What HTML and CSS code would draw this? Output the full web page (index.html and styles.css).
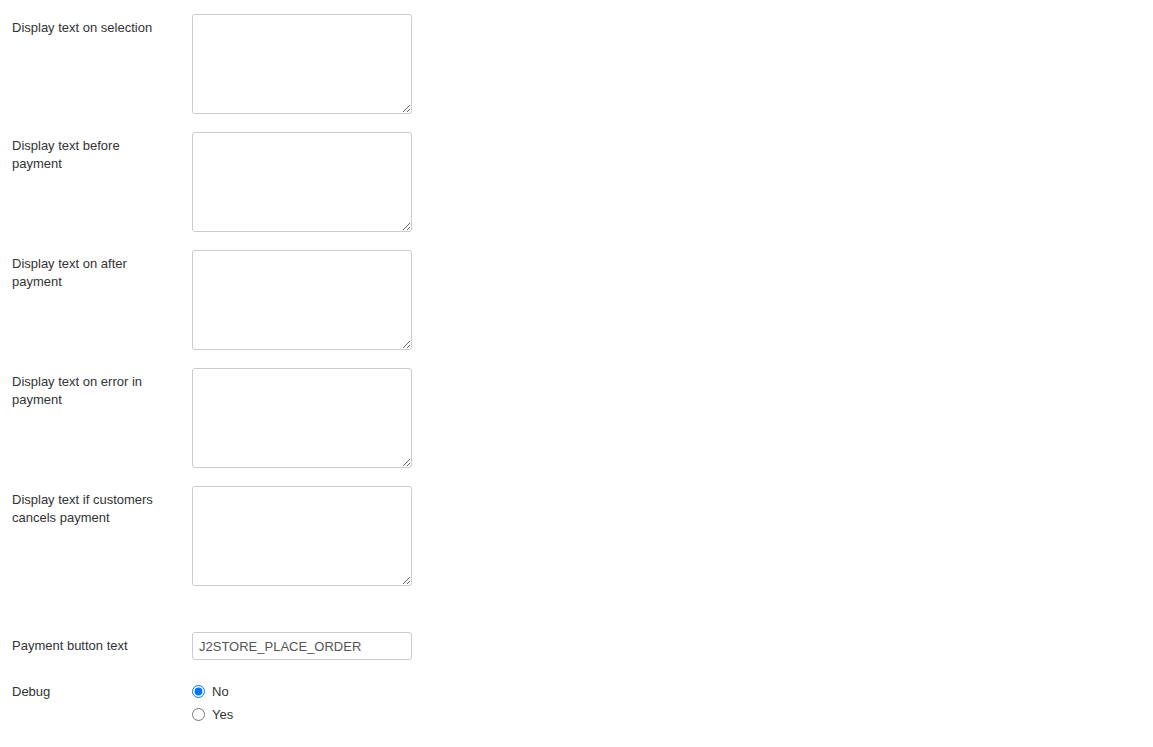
FILE: index.html
```html
<!DOCTYPE html>
<html>
<head>
<meta charset="utf-8">
<link rel="stylesheet" href="styles.css">
</head>
<body>
<form class="form">
  <div class="row">
    <label class="label">Display text on selection</label>
    <div class="control"><textarea class="area"></textarea></div>
  </div>
  <div class="row">
    <label class="label">Display text before payment</label>
    <div class="control"><textarea class="area"></textarea></div>
  </div>
  <div class="row">
    <label class="label">Display text on after payment</label>
    <div class="control"><textarea class="area"></textarea></div>
  </div>
  <div class="row">
    <label class="label">Display text on error in payment</label>
    <div class="control"><textarea class="area"></textarea></div>
  </div>
  <div class="row row-spaced">
    <label class="label">Display text if customers cancels payment</label>
    <div class="control"><textarea class="area"></textarea></div>
  </div>
  <div class="row">
    <label class="label">Payment button text</label>
    <div class="control"><input class="text" type="text" value="J2STORE_PLACE_ORDER"></div>
  </div>
  <div class="row">
    <label class="label">Debug</label>
    <div class="control radios">
      <label class="radio"><input type="radio" name="debug" checked> No</label>
      <label class="radio"><input type="radio" name="debug"> Yes</label>
    </div>
  </div>
</form>
</body>
</html>
```
FILE: styles.css
```css
html, body {
  margin: 0;
  background: #fff;
}
body {
  font-family: "Liberation Sans", Arial, sans-serif;
  font-size: 13px;
  color: #333;
}
.form {
  padding: 14px 12px;
}
.row {
  display: flex;
  margin-bottom: 18px;
}
.row-spaced {
  margin-bottom: 46px;
}
.label {
  width: 150px;
  margin-right: 30px;
  padding-top: 5px;
  line-height: 18px;
}
.area {
  display: block;
  box-sizing: border-box;
  width: 220px;
  height: 100px;
  margin: 0;
  border: 1px solid #ccc;
  border-radius: 3px;
  background: #fff;
  resize: both;
}
.text {
  display: block;
  box-sizing: border-box;
  width: 220px;
  height: 28px;
  margin: 0;
  padding: 4px 6px;
  border: 1px solid #ccc;
  border-radius: 3px;
  font-family: "Liberation Sans", Arial, sans-serif;
  font-size: 13px;
  color: #555;
}
.radios {
  display: flex;
  flex-direction: column;
  padding-top: 2px;
}
.radio {
  display: flex;
  align-items: center;
  height: 23px;
  line-height: 18px;
}
.radio input {
  margin: 0 7px 0 0;
  width: 13px;
  height: 13px;
}
```
